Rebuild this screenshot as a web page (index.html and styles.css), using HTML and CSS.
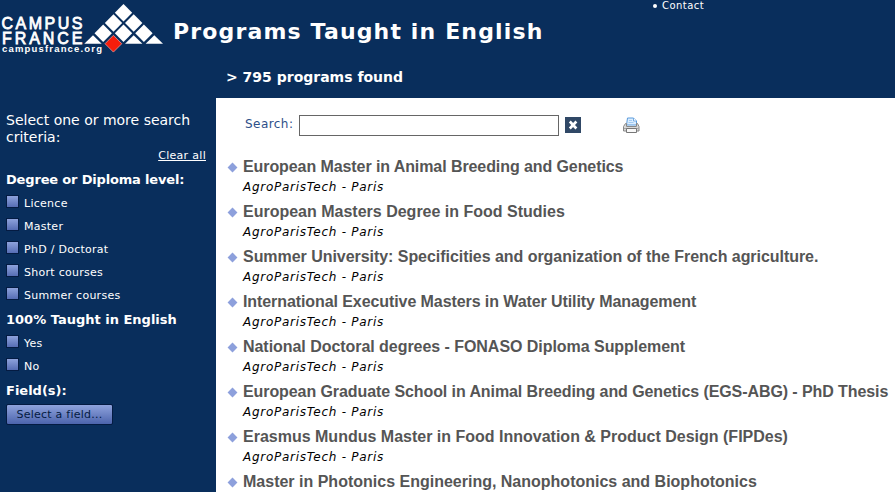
FILE: index.html
```html
<!DOCTYPE html>
<html lang="en">

<head>
    <meta charset="UTF-8">
    <title>Programs Taught in English</title>
    <link rel="stylesheet" href="styles.css">
</head>

<body>
    <div id="header">
        <svg class="logo" width="165" height="60" viewBox="0 0 165 60">
            <g class="logo-name">
                <text x="1.5" y="28.5" font-size="16" textLength="81">CAMPUS</text>
                <text x="2" y="43.5" font-size="16" textLength="80.5">FRANCE</text>
                <text x="2" y="52" font-size="9.5" font-weight="bold" textLength="100">campusfrance.org</text>
            </g>
            <g fill="#fff">
                <path d="M123.5 4l8.7 8.7-8.7 8.7-8.7-8.7z" />
                <path d="M113.5 14.3l8.7 8.7-8.7 8.7-8.7-8.7z" />
                <path d="M133.7 14.3l8.7 8.7-8.7 8.7-8.7-8.7z" />
                <path d="M103.2 24.5l8.7 8.7-8.7 8.7-8.7-8.7z" />
                <path d="M123.5 24.5l8.7 8.7-8.7 8.7-8.7-8.7z" />
                <path d="M143.9 24.5l8.7 8.7-8.7 8.7-8.7-8.7z" />
                <path d="M93 35.3l8.7 8.5H84.3z" />
                <path d="M133.7 35.3l8.7 8.5H125z" />
                <path d="M154.3 35.3l8.7 8.5h-17.4z" />
            </g>
            <path d="M113.4 35.3l8.4 8.4-8.4 8.4-8.4-8.4z" fill="#f51d0c" stroke="#f4a8a5" stroke-width=".7" />
        </svg>
        <div class="titles">
            <h1>Programs Taught in English</h1>
            <p class="found">&gt; 795 programs found</p>
        </div>
        <a class="contact"><i></i>Contact</a>
    </div>
    <div id="main">
        <div id="criteria">
            <p class="intro">Select one or more search criteria:</p>
            <a class="clear">Clear all</a>
            <h2 class="level">Degree or Diploma level:</h2>
            <ul>
                <li><i></i><span>Licence</span></li>
                <li><i></i><span>Master</span></li>
                <li><i></i><span>PhD / Doctorat</span></li>
                <li><i></i><span>Short courses</span></li>
                <li><i></i><span>Summer courses</span></li>
            </ul>
            <h2>100% Taught in English</h2>
            <ul>
                <li><i></i><span>Yes</span></li>
                <li><i></i><span>No</span></li>
            </ul>
            <h2>Field(s):</h2>
            <button>Select a field...</button>
        </div>
        <div id="results">
            <div class="search">
                <label for="query">Search:</label>
                <input type="text" id="query">
                <svg class="reset" width="16" height="16" viewBox="0 0 16 16">
                    <path d="M0 0h16v16H0z" fill="#304866" />
                    <path d="M4.8 4.5l6.6 7M11.4 4.5l-6.6 7" stroke="#fff" stroke-width="2.6" />
                </svg>
                <svg class="print" width="17" height="17" viewBox="0 0 17 17">
                    <path d="M3.5 8l1-7h6l3 3v4z" fill="#dceeff" stroke="#5b9bdc" />
                    <path d="M10.5 1v3h3" fill="#fff" stroke="#5b9bdc" stroke-width=".8" />
                    <path d="M6 3.5h3M5.5 5.5h5" stroke="#a3cbf2" />
                    <path d="M2.5 6.5h1v3h10v-3h1l1.500 3v4.500H.5V9.500z" fill="#d8d8d8" stroke="#888" />
                    <path d="M1 11.500h15" stroke="#a5a5a5" />
                    <path d="M3.500 11.500h10v4h-10z" fill="#f8f8f8" stroke="#777" />
                </svg>
            </div>
            <ul class="programs">
                <li>
                    <h3 class="tight">European Master in Animal Breeding and Genetics</h3>
                    <p>AgroParisTech - Paris</p>
                </li>
                <li>
                    <h3>European Masters Degree in Food Studies</h3>
                    <p>AgroParisTech - Paris</p>
                </li>
                <li>
                    <h3 class="snug">Summer University: Specificities and organization of the French agriculture.</h3>
                    <p>AgroParisTech - Paris</p>
                </li>
                <li>
                    <h3 class="tight">International Executive Masters in Water Utility Management</h3>
                    <p>AgroParisTech - Paris</p>
                </li>
                <li>
                    <h3 class="snug">National Doctoral degrees - FONASO Diploma Supplement</h3>
                    <p>AgroParisTech - Paris</p>
                </li>
                <li>
                    <h3 class="tight">European Graduate School in Animal Breeding and Genetics (EGS-ABG) - PhD Thesis</h3>
                    <p>AgroParisTech - Paris</p>
                </li>
                <li>
                    <h3>Erasmus Mundus Master in Food Innovation &amp; Product Design (FIPDes)</h3>
                    <p>AgroParisTech - Paris</p>
                </li>
                <li>
                    <h3>Master in Photonics Engineering, Nanophotonics and Biophotonics</h3>
                </li>
            </ul>
        </div>
    </div>
</body>

</html>
```
FILE: styles.css
```css
* {
    margin: 0;
    padding: 0;
    box-sizing: border-box;
}

body {
    height: 492px;
    overflow: hidden;
    background: #092e5c;
    color: #fff;
    font-family: Verdana, "DejaVu Sans", sans-serif;
    font-size: 11px;
}

ul {
    list-style: none;
}

#header {
    height: 98px;
    display: flex;
}

.logo {
    flex: none;
}

.logo-name {
    fill: #fff;
    font-family: "Liberation Sans", Arial, sans-serif;
}

.logo-name text:not([font-weight]) {
    stroke: #fff;
    stroke-width: .8px;
}

.titles {
    width: 488px;
    padding: 18px 0 0 8px;
}

h1 {
    font-size: 22px;
    line-height: 28px;
    letter-spacing: 1.15px;
    white-space: nowrap;
}

.found {
    margin: 22px 0 0 53px;
    font-size: 14px;
    font-weight: bold;
    line-height: 18px;
}

.contact {
    display: flex;
    align-items: center;
    height: 11px;
    font-size: 10px;
    letter-spacing: .45px;
}

.contact i {
    width: 4px;
    height: 4px;
    margin-right: 5px;
    border-radius: 50%;
    background: #fff;
}

#main {
    display: flex;
    height: 394px;
}

#criteria {
    width: 216px;
    padding: 14px 10px 0 6px;
}

.intro {
    font-size: 14px;
    line-height: 17px;
}

.clear {
    display: block;
    margin-top: 3px;
    line-height: 14px;
    letter-spacing: .3px;
    text-align: right;
    text-decoration: underline;
}

h2 {
    margin-top: 4px;
    font-size: 13px;
    line-height: 17px;
    white-space: nowrap;
}

h2.level {
    margin-top: 8px;
    letter-spacing: -.17px;
}

#criteria ul {
    margin-top: 4px;
}

#criteria li {
    display: flex;
    height: 23px;
    padding-top: 3px;
}

#criteria li i {
    width: 13px;
    height: 13px;
    border: 1px solid #041b42;
    background: linear-gradient(#8da2dc, #566db4);
}

#criteria li span {
    margin: 2px 0 0 5px;
    line-height: 14px;
    letter-spacing: .27px;
}

button {
    display: block;
    width: 107px;
    height: 21px;
    margin-top: 5px;
    border: 1px solid #041b42;
    border-radius: 2px;
    background: linear-gradient(#8fa3dd, #4c64ac);
    color: #041b42;
    font: 11px Verdana, "DejaVu Sans", sans-serif;
    letter-spacing: .25px;
    white-space: nowrap;
}

#results {
    flex: 1;
    min-width: 0;
    overflow: hidden;
    padding: 17px 0 0 12px;
    background: #fff;
    color: #000;
}

.search {
    display: flex;
    height: 21px;
    padding-left: 17px;
}

.search label {
    width: 54px;
    color: #2d4f89;
    font-size: 12px;
    line-height: 18px;
    letter-spacing: .45px;
}

.search input {
    width: 260px;
    height: 21px;
    border: 1px solid #666;
}

.reset {
    margin: 2px 0 0 6px;
}

.print {
    margin: 2px 0 0 42px;
}

.programs {
    margin-top: 21px;
}

.programs li {
    position: relative;
    height: 45px;
    padding-left: 15px;
}

.programs li::before {
    content: "";
    position: absolute;
    left: 1px;
    top: 7px;
    width: 7px;
    height: 7px;
    background: #8da0dc;
    transform: rotate(45deg);
}

.programs h3 {
    color: #555;
    font: bold 16px/20px "Liberation Sans", Arial, sans-serif;
    white-space: nowrap;
}

.programs h3.tight {
    letter-spacing: -.085px;
}

.programs h3.snug {
    letter-spacing: -.045px;
}

.programs p {
    font-size: 12px;
    font-style: italic;
    line-height: 20px;
    letter-spacing: .73px;
}
```
